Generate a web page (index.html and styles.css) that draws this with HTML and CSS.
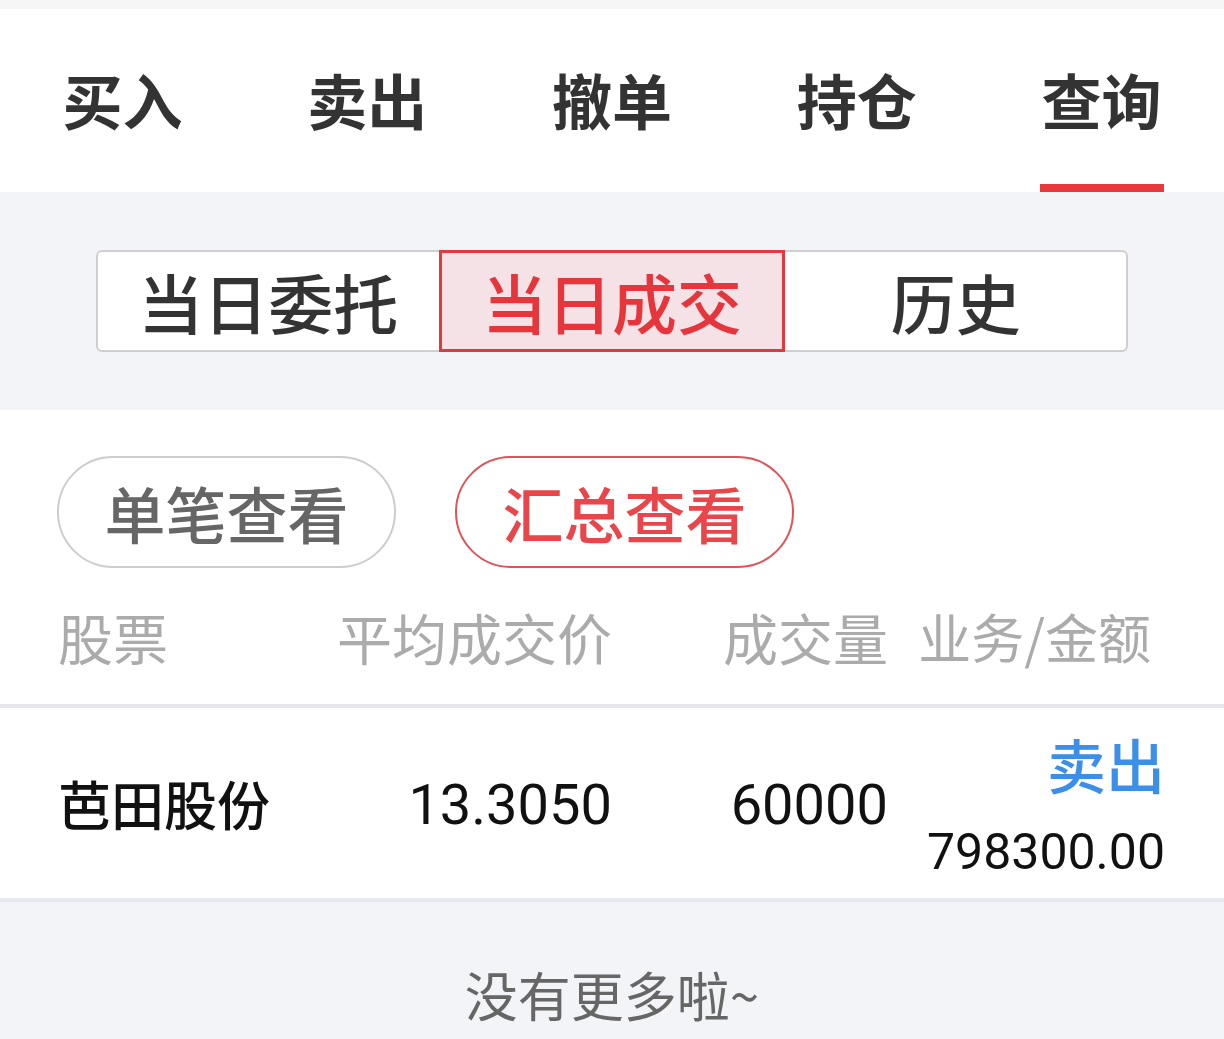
FILE: index.html
```html
<!DOCTYPE html>
<html lang="zh-CN">
<head>
    <meta charset="UTF-8">
    <meta name="viewport" content="width=device-width, initial-scale=1.0">
    <title>查询 - 当日成交</title>
    <link rel="stylesheet" href="styles.css">
</head>

<body>
    <div class="topbar"></div>

    <nav class="tabs">
        <div class="tab"><span>买入</span></div>
        <div class="tab"><span>卖出</span></div>
        <div class="tab"><span>撤单</span></div>
        <div class="tab"><span>持仓</span></div>
        <div class="tab active"><span>查询</span></div>
    </nav>

    <div class="segment-wrap">
        <div class="segment">
            <div class="seg-item">当日委托</div>
            <div class="seg-item active">当日成交</div>
            <div class="seg-item">历史</div>
        </div>
    </div>

    <div class="panel">
        <div class="pills">
            <button class="pill">单笔查看</button>
            <button class="pill active">汇总查看</button>
        </div>

        <div class="grid head">
            <div class="col-name">股票</div>
            <div class="col-num">平均成交价</div>
            <div class="col-num">成交量</div>
            <div class="col-num last">业务/金额</div>
        </div>

        <div class="grid row">
            <div class="col-name">芭田股份</div>
            <div class="col-num num">13.3050</div>
            <div class="col-num num">60000</div>
            <div class="col-num stack">
                <span class="side sell">卖出</span>
                <span class="amount">798300.00</span>
            </div>
        </div>
    </div>

    <div class="no-more">没有更多啦~</div>
</body>

</html>
```

FILE: styles.css
```css
body {
    margin: 0;
    background-color: #f3f4f8;
    font-family: "Noto Sans CJK SC", "Noto Sans", sans-serif;
    color: #333;
}

.topbar {
    height: 9px;
    background-color: #f6f6f7;
}

/* top tabs */
.tabs {
    display: flex;
    background-color: #fff;
    padding-top: 60px;
}

.tab {
    flex: 1;
    display: flex;
    justify-content: center;
}

.tab span {
    display: block;
    font-size: 60px;
    line-height: 60px;
    font-weight: bold;
    color: #333;
    padding: 0 2px 55px;
    border-bottom: 8px solid transparent;
}

.tab.active span {
    border-bottom-color: #e8383c;
}

/* segmented control */
.segment-wrap {
    padding: 58px 96px;
}

.segment {
    display: flex;
    background-color: #fff;
    border: 2px solid #cfcfd2;
    border-radius: 6px;
    height: 98px;
}

.seg-item {
    flex: 1;
    display: flex;
    justify-content: center;
    align-items: center;
    font-size: 65px;
    font-weight: 500;
    color: #333;
}

.seg-item.active {
    margin: -2px 0;
    background-color: #f5e2e6;
    border: 3px solid #e0393e;
    color: #e6353b;
}

/* white panel */
.panel {
    background-color: #fff;
    padding-top: 46px;
}

.pills {
    display: flex;
    gap: 59px;
    padding-left: 57px;
}

.pill {
    width: 339px;
    height: 112px;
    border-radius: 56px;
    border: 2px solid #cdcdcd;
    background-color: #fff;
    font-family: inherit;
    font-size: 61px;
    font-weight: 500;
    color: #666;
    padding: 0;
}

.pill.active {
    border-color: #e05358;
    color: #e8464a;
}

.grid {
    display: grid;
    grid-template-columns: 250px 304px 276px 277px;
    padding: 0 59px 0 58px;
    align-items: center;
}

.col-num {
    text-align: right;
}

.head {
    height: 136px;
    font-size: 55px;
    color: #ababab;
    border-bottom: 4px solid #e7e7ee;
}

.head .last {
    font-size: 53px;
    padding-right: 14px;
}

.row {
    height: 190px;
    border-bottom: 4px solid #e7e7ee;
}

.row .col-name {
    font-size: 53px;
    font-weight: 500;
    color: #111;
}

.num {
    font-family: Roboto, "Noto Sans", sans-serif;
    font-size: 56px;
    color: #111;
    padding-top: 4px;
}

.stack {
    display: flex;
    flex-direction: column;
    align-items: flex-end;
    padding-top: 12px;
}

.side {
    font-size: 59px;
    line-height: 76px;
    font-weight: 500;
}

.side.sell {
    color: #3b8fe8;
}

.amount {
    margin-top: 10px;
    font-family: Roboto, "Noto Sans", sans-serif;
    font-size: 50px;
    line-height: 80px;
    color: #111;
}

.no-more {
    text-align: center;
    font-size: 53px;
    color: #666;
    padding-top: 62px;
    line-height: 60px;
}
```
